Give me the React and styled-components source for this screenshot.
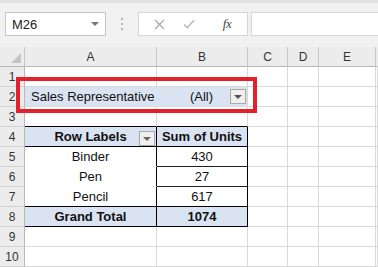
import React from "react";
import styled, { createGlobalStyle } from "styled-components";

const Global = createGlobalStyle`
  html, body { margin: 0; padding: 0; background: #ffffff; }
  body { font-family: "Liberation Sans", Arial, sans-serif; overflow: hidden; }
`;

const BLUE = "#dae3f2";
const GRID = "#d9d9d9";
const BLACK = "#000000";

const Page = styled.div`
  width: 378px;
  height: 267px;
  overflow: hidden;
  background: #ffffff;
`;

const Toolbar = styled.div`
  height: 47px;
  box-sizing: border-box;
  background: #f1f1f1;
  border-top: 3px solid #e1e1e1;
  display: flex;
  align-items: flex-start;
  padding: 9px 0 0 5px;
`;

const NameBox = styled.div`
  width: 101px;
  height: 24px;
  box-sizing: border-box;
  background: #ffffff;
  border: 1px solid #c6c6c6;
  display: flex;
  align-items: center;
  justify-content: space-between;
  padding: 0 6px 0 6px;
  font-size: 13px;
  color: #222;
`;

const Caret = styled.span`
  width: 0;
  height: 0;
  border-left: 4px solid transparent;
  border-right: 4px solid transparent;
  border-top: 4px solid ${(p) => p.$color || "#777"};
`;

const Dots = styled.div`
  width: 32px;
  height: 24px;
  display: flex;
  flex-direction: column;
  align-items: center;
  justify-content: center;
  gap: 3px;
  span {
    width: 2px;
    height: 2px;
    background: #b4b4b4;
  }
`;

const FxButtons = styled.div`
  width: 110px;
  height: 24px;
  box-sizing: border-box;
  background: #ffffff;
  border: 1px solid #d4d4d4;
  display: flex;
  align-items: center;
  padding-left: 10px;
`;

const FxIcon = styled.span`
  width: ${(p) => p.$w}px;
  display: flex;
  align-items: center;
  justify-content: center;
`;

const FxText = styled.span`
  font-family: "Liberation Serif", "Times New Roman", serif;
  font-style: italic;
  font-size: 13px;
  color: #444;
  letter-spacing: -0.5px;
`;

const FormulaInput = styled.div`
  flex: 1;
  height: 24px;
  box-sizing: border-box;
  margin-left: 3px;
  background: #ffffff;
  border: 1px solid #d4d4d4;
  border-right: none;
`;

const Grid = styled.div`
  position: relative;
  display: grid;
  grid-template-columns: 25px 132px 91px 40px 31px 57px 1fr;
  grid-auto-rows: 20px;
`;

const ColHead = styled.div`
  box-sizing: border-box;
  background: #ececec;
  border-right: 1px solid ${(p) => (p.$last ? "transparent" : "#c8c8c8")};
  border-bottom: 1px solid #b8b8b8;
  display: flex;
  align-items: center;
  justify-content: center;
  font-size: 12px;
  color: #333;
  position: relative;
`;

const CornerTri = styled.span`
  position: absolute;
  right: 3px;
  bottom: 3px;
  width: 0;
  height: 0;
  border-left: 10px solid transparent;
  border-bottom: 10px solid #c4c4c4;
`;

const RowHead = styled.div`
  box-sizing: border-box;
  background: #ececec;
  border-right: 1px solid #b8b8b8;
  border-bottom: 1px solid #d2d2d2;
  display: flex;
  align-items: center;
  justify-content: center;
  font-size: 12px;
  color: #333;
`;

const Cell = styled.div`
  position: relative;
  box-sizing: border-box;
  background: ${(p) => p.$bg || "#ffffff"};
  border-right: 1px solid ${(p) => p.$br || GRID};
  border-bottom: 1px solid ${(p) => p.$bb || GRID};
  display: flex;
  align-items: center;
  justify-content: ${(p) => p.$align || "flex-start"};
  padding: ${(p) => p.$pad || "0"};
  font-size: 13px;
  font-weight: ${(p) => (p.$bold ? 700 : 400)};
  color: #111;
  white-space: nowrap;
  overflow: visible;
`;

const DropBtn = styled.span`
  width: 16px;
  height: 15px;
  box-sizing: border-box;
  background: #efefef;
  border: 1px solid #a9a9a9;
  display: flex;
  align-items: center;
  justify-content: center;
  ${(p) =>
    p.$overlay
      ? `position: absolute; right: 1px; top: 4px;`
      : ``}
`;

const RedBox = styled.div`
  position: absolute;
  left: 16px;
  top: 30px;
  width: 241px;
  height: 36px;
  box-sizing: border-box;
  border: 4px solid #e3212b;
  pointer-events: none;
`;

const cols = ["A", "B", "C", "D", "E", ""];

const emptyCell = {};

const sheet = [
  { n: 1, cells: [] },
  {
    n: 2,
    cells: [
      { text: "Sales Representative", bg: BLUE, br: BLUE, pad: "0 0 0 6px" },
      { text: "(All)", bg: BLUE, align: "flex-end", pad: "0 1px 0 0", drop: true },
    ],
  },
  { n: 3, cells: [{ bb: BLACK }, { bb: BLACK }] },
  {
    n: 4,
    cells: [
      { text: "Row Labels", bg: BLUE, bb: BLACK, br: BLACK, bold: true, align: "center", filter: true },
      { text: "Sum of Units", bg: BLUE, bb: BLACK, br: BLACK, bold: true, align: "center" },
    ],
  },
  {
    n: 5,
    cells: [
      { text: "Binder", bb: "#ffffff", br: BLACK, align: "center" },
      { text: "430", bb: "#222", br: BLACK, align: "center" },
    ],
  },
  {
    n: 6,
    cells: [
      { text: "Pen", bb: "#ffffff", br: BLACK, align: "center" },
      { text: "27", bb: "#222", br: BLACK, align: "center" },
    ],
  },
  {
    n: 7,
    cells: [
      { text: "Pencil", bb: BLACK, br: BLACK, align: "center" },
      { text: "617", bb: BLACK, br: BLACK, align: "center" },
    ],
  },
  {
    n: 8,
    cells: [
      { text: "Grand Total", bg: BLUE, bb: BLACK, br: BLACK, bold: true, align: "center" },
      { text: "1074", bg: BLUE, bb: BLACK, br: BLACK, bold: true, align: "center" },
    ],
  },
  { n: 9, cells: [] },
  { n: 10, cells: [] },
];

function SheetCell({ c }) {
  return (
    <Cell $bg={c.bg} $bb={c.bb} $br={c.br} $align={c.align} $bold={c.bold} $pad={c.pad}>
      {c.text && <span>{c.text}</span>}
      {c.drop && (
        <DropBtn style={{ marginLeft: 17 }}>
          <Caret $color="#555" />
        </DropBtn>
      )}
      {c.filter && (
        <DropBtn $overlay>
          <Caret $color="#666" />
        </DropBtn>
      )}
    </Cell>
  );
}

export default function App() {
  return (
    <Page>
      <Global />
      <Toolbar>
        <NameBox>
          <span>M26</span>
          <Caret />
        </NameBox>
        <Dots>
          <span />
          <span />
          <span />
        </Dots>
        <FxButtons>
          <FxIcon $w={20}>
            <svg width="11" height="11" viewBox="0 0 11 11">
              <path d="M1 1 L10 10 M10 1 L1 10" stroke="#a8a8a8" strokeWidth="1.3" fill="none" />
            </svg>
          </FxIcon>
          <FxIcon $w={40}>
            <svg width="12" height="10" viewBox="0 0 12 10">
              <path d="M1 5.5 L4.3 8.8 L11 1.2" stroke="#b4b4b4" strokeWidth="1.3" fill="none" />
            </svg>
          </FxIcon>
          <FxIcon $w={36}>
            <FxText>fx</FxText>
          </FxIcon>
        </FxButtons>
        <FormulaInput />
      </Toolbar>
      <Grid>
        <ColHead>
          <CornerTri />
        </ColHead>
        {cols.map((c, i) => (
          <ColHead key={i} $last={i === cols.length - 1}>
            {c}
          </ColHead>
        ))}
        {sheet.map((row) => (
          <React.Fragment key={row.n}>
            <RowHead>{row.n}</RowHead>
            {cols.map((_, i) => (
              <SheetCell key={i} c={row.cells[i] || emptyCell} />
            ))}
          </React.Fragment>
        ))}
        <RedBox />
      </Grid>
    </Page>
  );
}
